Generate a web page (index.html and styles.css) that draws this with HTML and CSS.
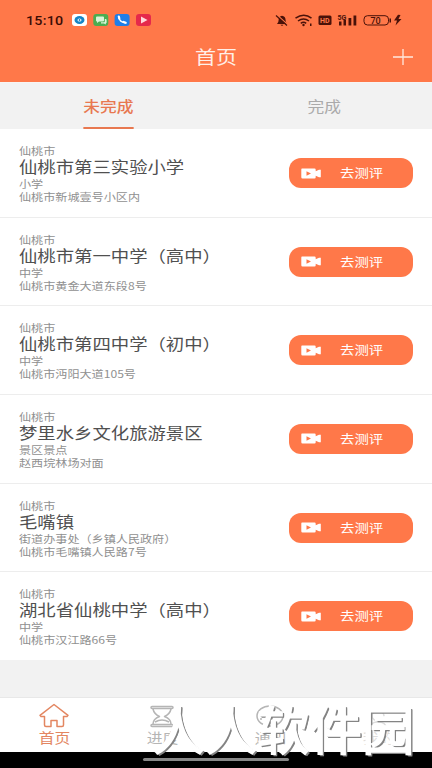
FILE: index.html
```html
<!DOCTYPE html>
<html lang="zh-CN">
<head>
<meta charset="utf-8">
<title>首页</title>
<link rel="stylesheet" href="styles.css">
</head>
<body>
<svg class="defs" width="0" height="0">
  <symbol id="camera" viewBox="0 0 21 11"><path fill="#fff" fill-rule="evenodd" d="M1 .5h12.500q1.200 0 1.200 1.200v1.600L18 1.800h1.800v7.500H18l-3.300-1.500v1.500q0 1.200-1.200 1.200H1.500Q.3 10.500.3 9.300V1.500Q.3.5 1 .5zM5.500 3.200v4.600l4.500-2.300z"/></symbol>
</svg>
<header class="header">
  <div class="status">
    <span class="clock">15:10</span>
    <svg class="apps" width="80" height="14" viewBox="0 0 80 14">
      <rect x="0" y="1" width="15" height="12" rx="3" fill="#fff"/><ellipse cx="7.500" cy="7" rx="5" ry="4" fill="#1685c5"/><ellipse cx="7.500" cy="7" rx="2" ry="1.600" fill="#fff"/><circle cx="7.500" cy="7" r=".9" fill="#1685c5"/>
      <rect x="21.300" y="1" width="15" height="12" rx="3" fill="#4bad51"/><path fill="#d9f5d8" d="M25 3.500h6q1 0 1 1v3q0 1-1 1h-4l-2 1.500v-1.500q-1 0-1-1v-3q0-1 1-1z"/><path fill="#d9f5d8" d="M32.800 6h.8q1 0 1 1v2.500q0 .8-.8.800v1.300L32 10.500h-3V9.300h3q.8 0 .8-.8z"/>
      <rect x="42.600" y="1" width="15" height="12" rx="3" fill="#1f7ee8"/><path d="M46.800 4q.5 5 6.400 5.800" fill="none" stroke="#fff" stroke-width="1.500"/><path d="M46.800 3.500l.5 2M51.500 9l2.200.8" stroke="#fff" stroke-width="2.200" stroke-linecap="round"/>
      <rect x="64" y="1" width="15" height="12" rx="3" fill="#e5294b"/><path fill="#ffd9dc" d="M69 3.500l6.500 3.500L69 10.500z"/>
    </svg>
    <svg class="signals" width="130" height="16" viewBox="0 0 130 16" fill="#4a1209">
      <path d="M3 12q1.700-1.500 1.700-4.500 0-3 3.300-3.800 3.500.8 3.500 3.800 0 3 1.500 4.500zM6.500 12.800h3q-1.500 1.800-3 0z"/><path d="M2.800 2.800l11 10" stroke="#ff7849" stroke-width="1.200"/><path d="M2 3.500l11 10" stroke="#4a1209" stroke-width="1.200"/>
      <g fill="none" stroke="#4a1209" stroke-width="1.500"><path d="M21.500 6.200q8.500-6 16 0M24 9q5.500-4 11 0M26.800 11.300q2.700-2 5.400 0"/></g><circle cx="29.500" cy="13" r="1.200"/><path d="M36 11.500h1.500V14H36z"/>
      <rect x="44.500" y="3.500" width="13" height="9.500" rx="1.500"/><text x="46" y="11" class="hd">HD</text>
      <text x="63.500" y="7.500" class="fiveg">5G</text><path d="M65 9.500h2.500v4H65zM69.500 8h2.500v5.500h-2.500zM74.500 6h2.800v7.500h-2.800zM79.500 3.500h2.800v10h-2.800z"/>
      <rect x="90" y="3.700" width="24.500" height="9.300" rx="3.500" fill="none" stroke="#4a1209"/><path d="M115.500 6.500h1.500v4h-1.500z"/><text x="96.500" y="11.700" class="battery">70</text><path d="M124 2.800l-4 5.800h3l-1.500 5 6-6.700h-3l2-4z"/>
    </svg>
  </div>
  <div class="titlebar"><h1>首页</h1><svg class="plus" width="22" height="18" viewBox="0 0 22 18"><path d="M1 9h20M11 1v16" stroke="#ffe9df" stroke-width="1.300"/></svg></div>
</header>
<nav class="tabs"><div class="tab active"><span>未完成</span></div><div class="tab"><span>完成</span></div></nav>
<main class="list">
  <article class="card"><div class="info"><p>仙桃市</p><h2>仙桃市第三实验小学</h2><p>小学</p><p>仙桃市新城壹号小区内</p></div><button class="go"><svg><use href="#camera"/></svg><span>去测评</span></button></article>
  <article class="card"><div class="info"><p>仙桃市</p><h2>仙桃市第一中学（高中）</h2><p>中学</p><p>仙桃市黄金大道东段8号</p></div><button class="go"><svg><use href="#camera"/></svg><span>去测评</span></button></article>
  <article class="card"><div class="info"><p>仙桃市</p><h2>仙桃市第四中学（初中）</h2><p>中学</p><p>仙桃市沔阳大道105号</p></div><button class="go"><svg><use href="#camera"/></svg><span>去测评</span></button></article>
  <article class="card"><div class="info"><p>仙桃市</p><h2>梦里水乡文化旅游景区</h2><p>景区景点</p><p>赵西垸林场对面</p></div><button class="go"><svg><use href="#camera"/></svg><span>去测评</span></button></article>
  <article class="card"><div class="info"><p>仙桃市</p><h2>毛嘴镇</h2><p>街道办事处（乡镇人民政府）</p><p>仙桃市毛嘴镇人民路7号</p></div><button class="go"><svg><use href="#camera"/></svg><span>去测评</span></button></article>
  <article class="card"><div class="info"><p>仙桃市</p><h2>湖北省仙桃中学（高中）</h2><p>中学</p><p>仙桃市汉江路66号</p></div><button class="go"><svg><use href="#camera"/></svg><span>去测评</span></button></article>
</main>
<footer class="bottom">
  <nav class="dock">
    <div class="item current"><svg width="32" height="26" viewBox="0 0 32 26"><path d="M16 1.500L2 12.300l1 1.200h3.500V22q0 1.500 1.500 1.500h5v-6h6v6h5q1.500 0 1.500-1.500v-8.500H29l1-1.200z"/></svg><span>首页</span></div>
    <div class="item"><svg width="32" height="26" viewBox="0 0 32 26"><path d="M6 3.500h20q1 0 1 1t-1 1H6q-1 0-1-1t1-1zM6 21.500h20q1 0 1 1t-1 1H6q-1 0-1-1t1-1zM7 6q1 5 6.500 7.500Q7 16 7 21M25 6q-1 5-6.500 7.500Q25 16 25 21M9 19q7-4 14 0"/></svg><span>进度</span></div>
    <div class="item"><svg width="32" height="26" viewBox="0 0 32 26"><ellipse cx="16" cy="13" rx="13" ry="10"/><path d="M7 9v2M7 15v2"/></svg><span>通知</span></div>
    <div class="item faint"><svg width="26" height="26" viewBox="0 0 26 26"><ellipse cx="13" cy="13" rx="6" ry="5"/><path d="M5 25q0-6 8-6t8 6"/></svg><span>我的</span></div>
  </nav>
  <div class="system"></div>
  <div class="watermark">人人软件园</div>
  <i class="gesture"></i>
</footer>
</body>
</html>
```

FILE: styles.css
```css
* { box-sizing: border-box; }
body { margin: 0; width: 432px; height: 768px; overflow: hidden; display: flex; flex-direction: column; background: #f2f2f2; font-family: "Noto Sans CJK SC", sans-serif; }
h1, h2, p { margin: 0; font-weight: 400; }
.defs { position: absolute; }
.header { height: 82px; background: #ff7849; flex: none; }
.status { height: 40px; padding: 13px 28px 0 26px; display: flex; align-items: flex-start; }
.clock { width: 46px; font: 500 13px/15px Roboto, sans-serif; color: #3b0c05; transform: scaleX(1.1); transform-origin: left; letter-spacing: .2px; }
.apps { flex: none; }
.signals { margin: -1px 0 0 auto; flex: none; }
.hd { font: bold 7px Roboto, sans-serif; fill: #ff7849; }
.fiveg { font: bold 7px Roboto, sans-serif; }
.battery { font: 500 9px Roboto, sans-serif; }
.titlebar { height: 34px; display: grid; grid-template-columns: 1fr auto 1fr; align-items: center; padding: 0 18px; color: #ffefe8; }
.titlebar h1 { grid-column: 2; font-size: 18px; line-height: 32px; height: 34px; transform: scaleX(1.17); }
.plus { justify-self: end; }
.tabs { height: 47px; display: flex; flex: none; border-top: 1px solid #f7f4f3; }
.tab { flex: 1; display: flex; justify-content: center; color: #aaa; font-size: 14.3px; line-height: 46px; }
.tab span { transform: scaleX(1.17); height: 46px; }
.active { color: #e87850; font-weight: 500; }
.active span { border-bottom: 2px solid #e87850; }
.list { display: flex; flex-direction: column; gap: 1px; background: #ededed; }
.card { height: 87.650px; padding: 15px 19px 0; background: #fff; display: flex; justify-content: space-between; }
.info { transform: scaleX(1.17); transform-origin: left; white-space: nowrap; color: #909090; font-size: 10.350px; line-height: 13px; }
.info h2 { font-size: 15.700px; line-height: 20px; color: #505050; }
.go { width: 124px; height: 30px; margin: 14px 0 0; padding: 0 0 0 12px; border: 0; border-radius: 12px; background: #ff7849; color: #fff; display: flex; align-items: center; font: 12.300px/30px "Noto Sans CJK SC", sans-serif; }
.go svg { width: 21px; height: 11px; }
.go span { margin-left: 18px; transform: scaleX(1.17); transform-origin: left; }
.bottom { position: relative; margin-top: auto; height: 71px; border-top: 1px solid #e8e8e8; background: #fff; }
.dock { height: 54px; display: flex; }
.item { flex: 1; display: flex; flex-direction: column; align-items: center; padding-top: 5px; font-size: 13.500px; line-height: 17px; color: #b5b5b5; }
.item svg { flex: none; fill: none; stroke: currentColor; stroke-width: 1.500; stroke-linejoin: round; }
.item span { transform: scaleX(1.17); }
.current { color: #e38661; }
.faint { color: #ddd; }
.system { height: 16px; background: #000; }
.gesture { position: absolute; left: 143px; bottom: 7px; width: 146px; height: 3px; border-radius: 2px; background: #888; }
.watermark { position: absolute; left: 152px; top: 3px; font-size: 52.500px; line-height: 52px; color: #fff; -webkit-text-stroke: 1.5px #fff; text-shadow: 1px 1px 0 #848484, 2px 1px 0 #848484, 2px 2px 0 #848484; white-space: nowrap; }
```
